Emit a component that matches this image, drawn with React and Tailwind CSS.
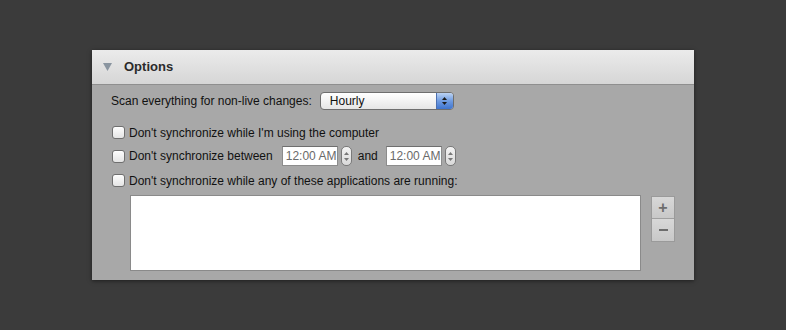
import { useState } from 'react';

function Checkbox() {
  return (
    <span className="w-[13px] h-[13px] rounded-[3px] border border-[#6f6f6f] bg-gradient-to-b from-[#fdfdfd] to-[#e4e4e4] shadow-[inset_0_1px_1px_rgba(255,255,255,0.8)] shrink-0" />
  );
}

function Stepper() {
  return (
    <div className="w-[11px] h-[20px] rounded-[5px] border border-[#7a7a7a] bg-gradient-to-b from-[#f3f3f3] to-[#d9d9d9] flex flex-col items-center justify-center gap-[3px]">
      <svg width="5" height="3" viewBox="0 0 5 3"><path d="M0 3 L2.5 0 L5 3 Z" fill="#777" /></svg>
      <svg width="5" height="3" viewBox="0 0 5 3"><path d="M0 0 L2.5 3 L5 0 Z" fill="#777" /></svg>
    </div>
  );
}

function TimeField({ value }) {
  return (
    <div className="flex items-center gap-[3px]">
      <div className="w-[56px] h-[20px] bg-white border border-[#8c8c8c] border-t-[#6f6f6f] flex items-center pl-[3px] text-[#6a6a6a] text-[12px] whitespace-nowrap">
        {value}
      </div>
      <Stepper />
    </div>
  );
}

export default function App() {
  const [freq] = useState('Hourly');

  return (
    <div
      className="w-[786px] h-[330px] bg-[#3b3b3b] flex flex-col items-start pt-[50px] pl-[92px]"
      style={{ fontFamily: '"Liberation Sans", Arial, sans-serif' }}
    >
      <div className="w-[602px] h-[230px] bg-[#a8a8a8] flex flex-col shadow-[0_1px_4px_rgba(0,0,0,0.5)]">
        {/* Header */}
        <div className="h-[35px] bg-gradient-to-b from-[#ebebeb] to-[#d6d6d6] border-b border-[#8f8f8f] flex items-center pl-[11px] shrink-0">
          <svg width="9" height="8" viewBox="0 0 9 8" className="mr-[12px]">
            <path d="M0 0 L9 0 L4.5 8 Z" fill="#8a95a0" />
          </svg>
          <span className="text-[13px] font-bold text-[#2b2b2b]">Options</span>
        </div>

        {/* Body */}
        <div className="flex flex-col pl-[19px] pt-[7px] text-[12px] text-[#111] whitespace-nowrap">
          <div className="flex items-center h-[18px]">
            <span>Scan everything for non-live changes:</span>
            <div className="ml-[8px] w-[134px] h-[18px] rounded-[4px] border border-[#6e6e6e] bg-gradient-to-b from-[#ffffff] to-[#e6e6e6] flex items-center overflow-hidden">
              <span className="flex-1 pl-[9px] text-[12px]">{freq}</span>
              <div className="w-[17px] h-full bg-gradient-to-b from-[#bcd3f3] via-[#6f9be0] to-[#3e74cf] border-l border-[#4b6fb0] flex flex-col items-center justify-center gap-[2px]">
                <svg width="5" height="3" viewBox="0 0 5 3"><path d="M0 3 L2.5 0 L5 3 Z" fill="#1a1a1a" /></svg>
                <svg width="5" height="3" viewBox="0 0 5 3"><path d="M0 0 L2.5 3 L5 0 Z" fill="#1a1a1a" /></svg>
              </div>
            </div>
          </div>

          <div className="flex flex-col pl-[1px] mt-[14px] gap-[5px]">
            <div className="flex items-center gap-[4px] h-[17px]">
              <Checkbox />
              <span>Don't synchronize while I'm using the computer</span>
            </div>
            <div className="flex items-center gap-[4px] h-[20px]">
              <Checkbox />
              <span>Don't synchronize between</span>
              <div className="ml-[5px]">
                <TimeField value="12:00 AM" />
              </div>
              <span className="ml-[2px] mr-[4px]">and</span>
              <TimeField value="12:00 AM" />
            </div>
            <div className="flex items-center gap-[4px] h-[17px] mt-[1px]">
              <Checkbox />
              <span>Don't synchronize while any of these applications are running:</span>
            </div>
          </div>

          <div className="flex items-start mt-[6px] pl-[19px]">
            <div className="w-[511px] h-[76px] bg-white border border-[#8a8a8a]" />
            <div className="ml-[10px] flex flex-col mt-[1px] border border-[#9a9a9a]">
              <button className="w-[22px] h-[22px] bg-gradient-to-b from-[#d8d8d8] to-[#c8c8c8] border-b border-[#a0a0a0] flex items-center justify-center text-[#6d6d6d] text-[16px] font-bold leading-none">
                +
              </button>
              <button className="w-[22px] h-[22px] bg-gradient-to-b from-[#d8d8d8] to-[#c8c8c8] flex items-center justify-center">
                <span className="w-[9px] h-[2px] bg-[#6d6d6d]" />
              </button>
            </div>
          </div>
        </div>
      </div>
    </div>
  );
}
